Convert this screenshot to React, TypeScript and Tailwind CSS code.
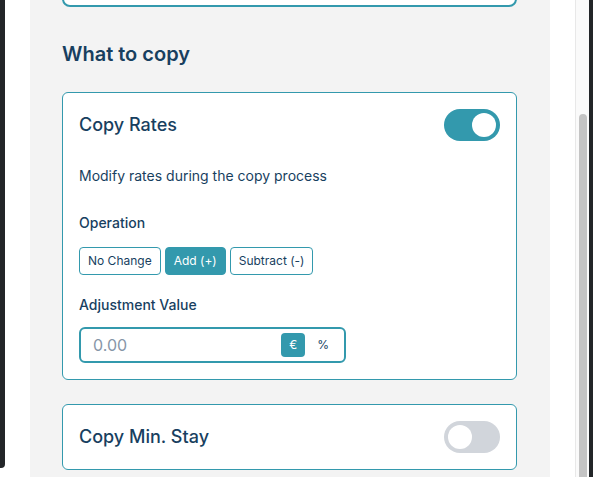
import { useState } from "react";

const Toggle = ({ on, onClick }: { on: boolean; onClick: () => void }) => (
    <button
        type="button"
        onClick={onClick}
        className={`relative flex h-8 w-14 shrink-0 items-center rounded-full px-1 ${on ? 'justify-end bg-[#3399ad]' : 'justify-start bg-[#d1d5db]'}`}
    >
        <span className="h-6 w-6 rounded-full bg-white" />
    </button>
);

const App = () => {
    const [copyRates, setCopyRates] = useState(true);
    const [copyMinStay, setCopyMinStay] = useState(false);
    const [operation, setOperation] = useState('add');
    const [unit, setUnit] = useState('eur');
    const [value, setValue] = useState('');

    const ops = [
        { key: 'none', label: 'No Change' },
        { key: 'add', label: 'Add (+)' },
        { key: 'sub', label: 'Subtract (-)' },
    ];

    return (
        <div className="flex h-[477px] w-full overflow-hidden bg-white text-[#183f5f]" style={{ fontFamily: 'Inter, "Noto Sans", sans-serif' }}>
            <div className="h-[468px] w-[5px] shrink-0 rounded-br-sm bg-[#222528]" />
            <div className="w-[25px] shrink-0" />

            <div className="w-[520px] shrink-0 overflow-hidden bg-[#f3f3f3] pl-8 pr-[33px]">
                <div className="-mt-[40px] h-[47px] rounded-lg border-2 border-[#3399ad] bg-white" />

                <h2 className="mt-[33px] text-xl font-semibold leading-7">What to copy</h2>

                <div className="mt-6 rounded-md border border-[#3399ad] bg-white p-4">
                    <div className="flex items-center justify-between">
                        <span className="text-lg font-medium">Copy Rates</span>
                        <Toggle on={copyRates} onClick={() => setCopyRates(!copyRates)} />
                    </div>

                    <p className="mt-[25px] text-sm leading-5">Modify rates during the copy process</p>

                    <p className="mt-[27px] text-sm font-medium leading-5">Operation</p>
                    <div className="mt-[14px] flex gap-1">
                        {ops.map((op) => (
                            <button
                                key={op.key}
                                type="button"
                                onClick={() => setOperation(op.key)}
                                className={`h-7 rounded border px-2 text-xs ${operation === op.key ? 'border-[#3399ad] bg-[#3399ad] text-white' : 'border-[#3399ad] bg-white text-[#183f5f]'}`}
                            >
                                {op.label}
                            </button>
                        ))}
                    </div>

                    <p className="mt-5 text-sm font-medium leading-5">Adjustment Value</p>
                    <div className="mt-3 flex h-9 w-[267px] items-center rounded-md border-2 border-[#3399ad] pl-3 pr-[7px]">
                        <input
                            type="text"
                            value={value}
                            onChange={(e) => setValue(e.target.value)}
                            placeholder="0.00"
                            className="min-w-0 flex-1 bg-transparent text-base text-[#183f5f] outline-none placeholder:text-[#8796a8]"
                        />
                        <div className="flex gap-1 text-xs">
                            <button
                                type="button"
                                onClick={() => setUnit('eur')}
                                className={`h-6 rounded px-2 ${unit === 'eur' ? 'bg-[#3399ad] text-white' : 'text-[#183f5f]'}`}
                            >
                                €
                            </button>
                            <button
                                type="button"
                                onClick={() => setUnit('pct')}
                                className={`h-6 rounded px-2 ${unit === 'pct' ? 'bg-[#3399ad] text-white' : 'text-[#183f5f]'}`}
                            >
                                %
                            </button>
                        </div>
                    </div>
                </div>

                <div className="mt-6 flex items-center justify-between rounded-md border border-[#3399ad] bg-white p-4">
                    <span className="text-lg font-medium">Copy Min. Stay</span>
                    <Toggle on={copyMinStay} onClick={() => setCopyMinStay(!copyMinStay)} />
                </div>
            </div>

            <div className="w-[25px] shrink-0" />
            <div className="flex w-[14px] shrink-0 border-l border-[#e8e8e8] bg-[#fafafa] pt-[114px]">
                <div className="mx-auto h-full w-2 rounded-t bg-[#c4c4c4]" />
            </div>
            <div className="w-[4px] shrink-0 bg-[#222528]" />
        </div>
    );
};

export default App;
